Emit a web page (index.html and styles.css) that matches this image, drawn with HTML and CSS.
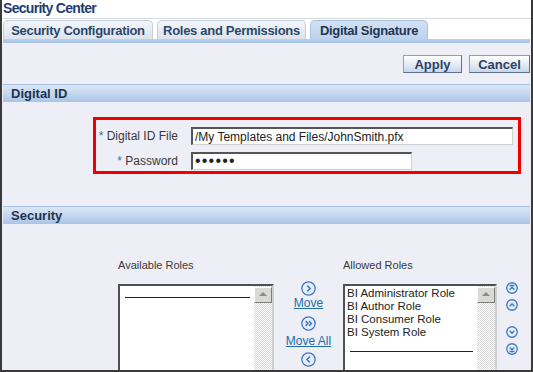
FILE: index.html
```
<!DOCTYPE html>
<html lang="en">
<head>
  <meta charset="UTF-8" />
  <title>Security Center</title>
  <link rel="stylesheet" href="styles.css">
</head>
<body>
  <div class="window">
    <div class="title">Security Center</div>
    <div class="tabs">
      <div class="tab">Security Configuration</div>
      <div class="tab">Roles and Permissions</div>
      <div class="tab active">Digital Signature</div>
    </div>
    <div class="tabbar"></div>

    <div class="content">
      <div class="actions">
        <button class="btn btn-apply">Apply</button>
        <button class="btn btn-cancel">Cancel</button>
      </div>

      <div class="section-head">Digital ID</div>
      <div class="id-box">
        <label class="field-label"><span class="req">*</span> Digital ID File</label>
        <input class="field field-file" type="text" value="/My Templates and Files/JohnSmith.pfx" />
        <label class="field-label"><span class="req">*</span> Password</label>
        <input class="field field-pass" type="password" value="secret" />
      </div>

      <div class="section-head section-security">Security</div>
      <div class="shuttle">
        <div class="col col-available">
          <div class="list-label">Available Roles</div>
          <div class="listbox">
            <div class="list-items">
              <div class="list-sep"></div>
            </div>
            <div class="scrollbar"><div class="scroll-up"></div></div>
          </div>
        </div>

        <div class="moves">
          <svg class="circ" viewBox="0 0 14 14"><circle cx="7" cy="7" r="6.2"/><path d="M5.8 4.3 8.5 7 5.8 9.7"/></svg>
          <a class="move-link" href="#">Move</a>
          <svg class="circ circ-all" viewBox="0 0 14 14"><circle cx="7" cy="7" r="6.2"/><path d="M4.3 4.8 6.5 7 4.3 9.2M7.5 4.8 9.7 7 7.5 9.2"/></svg>
          <a class="move-link" href="#">Move All</a>
          <svg class="circ circ-back" viewBox="0 0 14 14"><circle cx="7" cy="7" r="6.2"/><path d="M8.2 4.3 5.5 7 8.2 9.7"/></svg>
        </div>

        <div class="col col-allowed">
          <div class="list-label">Allowed Roles</div>
          <div class="listbox">
            <div class="list-items">
              <div class="list-item">BI Administrator Role</div>
              <div class="list-item">BI Author Role</div>
              <div class="list-item">BI Consumer Role</div>
              <div class="list-item">BI System Role</div>
              <div class="list-sep"></div>
            </div>
            <div class="scrollbar"><div class="scroll-up"></div></div>
          </div>
        </div>

        <div class="reorder">
          <svg class="mini" viewBox="0 0 11 11"><circle cx="5.5" cy="5.5" r="4.8"/><path d="M3.3 3.2H7.7M3.4 6.9 5.5 4.8 7.6 6.9"/></svg>
          <svg class="mini" viewBox="0 0 11 11"><circle cx="5.5" cy="5.5" r="4.8"/><path d="M3.4 6.6 5.5 4.4 7.6 6.6"/></svg>
          <svg class="mini mini-gap" viewBox="0 0 11 11"><circle cx="5.5" cy="5.5" r="4.8"/><path d="M3.4 4.4 5.5 6.6 7.6 4.4"/></svg>
          <svg class="mini" viewBox="0 0 11 11"><circle cx="5.5" cy="5.5" r="4.8"/><path d="M3.4 4.1 5.5 6.2 7.6 4.1M3.3 7.8H7.7"/></svg>
        </div>
      </div>
    </div>
  </div>
</body>
</html>
```
FILE: styles.css
```
:root {
  --frame: #3a3a3a;
  --page-bg: #eeeef6;
  --ink: #333;
  --navy: #1c3d72;
  --head-ink: #22344c;
  --link: #1f6ea6;
  --icon: #3f78c4;
}

* {
  box-sizing: border-box;
}

body {
  margin: 0;
  font-family: "Liberation Sans", Arial, sans-serif;
  color: var(--ink);
  background: #fff;
}

.window {
  width: 533px;
  height: 372px;
  border: 2px solid var(--frame);
  border-top: none;
  display: flex;
  flex-direction: column;
  overflow: hidden;
  background: #fff;
}

.title {
  height: 19px;
  padding: 0 0 0 1px;
  font-size: 14px;
  font-weight: bold;
  letter-spacing: -0.7px;
  color: var(--navy);
  border-bottom: 1px solid #d6d9de;
}

.tabs {
  display: flex;
  gap: 4px;
  height: 20px;
  padding-left: 1px;
  align-items: flex-end;
}

.tab {
  height: 19px;
  padding-top: 2px;
  font-size: 13px;
  font-weight: bold;
  letter-spacing: -0.3px;
  text-align: center;
  color: #2b4869;
  background: linear-gradient(#f3f5f9, #dde4ee);
  border: 1px solid #c2cedd;
  border-bottom: none;
  border-radius: 5px 5px 0 0;
  white-space: nowrap;
}

.tab:first-child {
  width: 150px;
}

.tab:nth-child(2) {
  width: 149px;
}

.tab.active {
  width: 118px;
  color: #1f3552;
  background: linear-gradient(#d3e2f4, #bcd2ec);
  border-color: #a9c0dd;
}

.tabbar {
  height: 4px;
  margin: 0 1px;
  background: linear-gradient(#bcd2ec, #a3c0e3);
}

.content {
  flex: 1;
  overflow: hidden;
  padding: 0 1px;
  background: var(--page-bg);
}

.actions {
  display: flex;
  justify-content: flex-end;
  gap: 7px;
  padding-top: 12px;
}

.btn {
  height: 18px;
  padding: 0;
  font-family: "Liberation Sans", Arial, sans-serif;
  font-size: 13px;
  font-weight: bold;
  color: #2a4266;
  background: linear-gradient(#ffffff, #e3eaf3 55%, #c9d6e8);
  border: 1px solid #8ea0ba;
  border-right-color: #5f7190;
  border-bottom-color: #5f7190;
}

.btn-apply {
  width: 59px;
}

.btn-cancel {
  width: 61px;
}

.section-head {
  height: 18px;
  margin-top: 11px;
  padding: 1px 0 0 8px;
  font-size: 13px;
  font-weight: bold;
  color: var(--head-ink);
  background: linear-gradient(#dbe7f5, #c4d7ee 50%, #a9c5e7);
  border-top: 1px solid #a6bfdd;
}

.section-security {
  margin-top: 32px;
}

.id-box {
  display: grid;
  grid-template-columns: 82px 322px;
  column-gap: 13px;
  row-gap: 4px;
  align-items: center;
  width: 428px;
  height: 57px;
  margin: 15px 0 0 90px;
  padding: 6px 5px 0 0;
  border: 3px solid #f20000;
}

.field-label {
  font-size: 12px;
  text-align: right;
  white-space: nowrap;
  color: #3a3a3a;
}

.req {
  color: #3a6fa8;
}

.field {
  height: 18px;
  padding: 0 2px;
  font-family: "Liberation Sans", Arial, sans-serif;
  font-size: 12px;
  color: #222;
  background: #fff;
  border: 1px solid #d0d0d0;
  border-top: 2px solid #555;
  border-left: 2px solid #555;
  outline: none;
}

.field-pass {
  width: 221px;
  font-size: 16px;
  letter-spacing: 1.2px;
}

.shuttle {
  display: flex;
  margin: 35px 0 0 115px;
}

.col-available {
  width: 156px;
}

.col-allowed {
  width: 154px;
}

.list-label {
  height: 14px;
  font-size: 11px;
  color: #3a3a3a;
}

.listbox {
  display: flex;
  height: 120px;
  margin-top: 11px;
  background: #fff;
  border-top: 2px solid #505050;
  border-left: 2px solid #505050;
  border-right: 2px solid #cfcfcf;
}

.list-items {
  flex: 1;
  padding: 0 2px;
}

.list-item {
  height: 13px;
  line-height: 13px;
  font-size: 11.5px;
  color: #222;
  white-space: nowrap;
}

.list-item:first-child {
  margin-top: 1px;
}

.list-sep {
  height: 12px;
  margin: 0 2px 0 3px;
  border-bottom: 1px solid #222;
}

.col-allowed .list-sep {
  height: 13px;
}

.scrollbar {
  width: 18px;
  background: repeating-conic-gradient(#d9d9d9 0 25%, #ffffff 0 50%) 0 0 / 2px 2px;
}

.scroll-up {
  position: relative;
  height: 16px;
  margin-top: 1px;
  background: #d9d9d6;
  border: 1px solid #fff;
  border-right-color: #7c7c7c;
  border-bottom-color: #7c7c7c;
}

.scroll-up::after {
  content: "";
  position: absolute;
  left: 4px;
  top: 4px;
  border: 4px solid transparent;
  border-top: none;
  border-bottom: 4px solid #8a8a8a;
}

.moves {
  display: flex;
  flex-direction: column;
  align-items: center;
  width: 69px;
  padding-top: 22px;
}

.circ {
  width: 15px;
  height: 15px;
}

.circ circle,
.mini circle {
  fill: #e6eefa;
  stroke: var(--icon);
  stroke-width: 1.2;
}

.circ path,
.mini path {
  fill: none;
  stroke: var(--icon);
  stroke-width: 1.4;
}

.move-link {
  margin-top: 1px;
  line-height: 12px;
  font-size: 12px;
  color: var(--link);
  text-decoration: underline;
}

.circ-all {
  margin-top: 7px;
}

.circ-back {
  margin-top: 5px;
}

.circ-all + .move-link {
  margin-top: 4px;
}

.reorder {
  display: flex;
  flex-direction: column;
  margin: 23px 0 0 9px;
  gap: 5px;
}

.mini {
  width: 12px;
  height: 12px;
}

.mini-gap {
  margin-top: 10px;
}
```
